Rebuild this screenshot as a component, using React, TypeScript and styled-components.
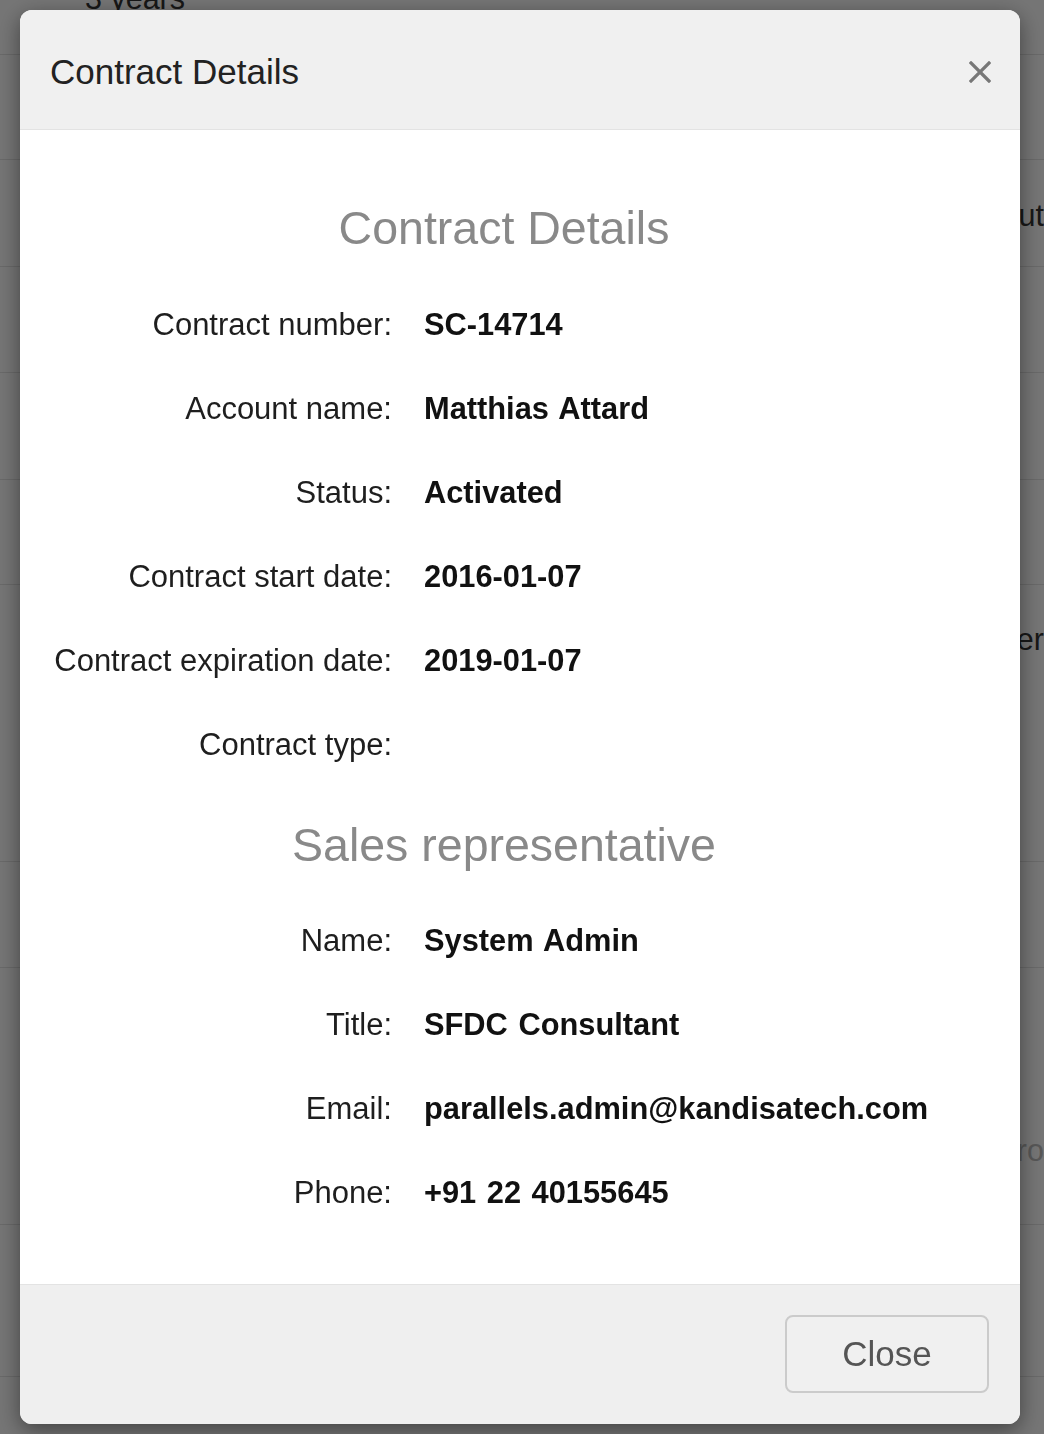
import React from "react";
import styled, { createGlobalStyle } from "styled-components";

const GlobalStyle = createGlobalStyle`
  html, body {
    margin: 0;
    padding: 0;
    overflow: hidden;
    background: #ffffff;
  }
  * { box-sizing: border-box; }
`;

const FONT = `"Liberation Sans", Arial, Helvetica, sans-serif`;

/* ---------- background page (covered by the backdrop) ---------- */
const Page = styled.div`
  font-family: ${FONT};
  width: 100%;
  height: 1434px;
  background: #ffffff;
  overflow: hidden;
`;

const BgRow = styled.div<{ $h: number; $first?: boolean; $top: number }>`
  height: ${(p) => p.$h}px;
  border-bottom: 1px solid #e4e4e4;
  display: flex;
  justify-content: space-between;
  align-items: ${(p) => (p.$first ? "flex-end" : "flex-start")};
  padding: ${(p) => (p.$first ? "0 0 36px 85px" : `${p.$top}px 0 0 85px`)};
`;

const BgCell = styled.span<{ $muted?: boolean }>`
  font-size: 30.5px;
  line-height: 40px;
  color: ${(p) => (p.$muted ? "#bdbdbd" : "#333333")};
  white-space: nowrap;
`;

/* ---------- modal ---------- */
const Backdrop = styled.div`
  position: fixed;
  inset: 0;
  background: rgba(0, 0, 0, 0.54);
  display: flex;
  align-items: flex-start;
  padding: 10px 24px 10px 20px;
`;

const Modal = styled.div`
  width: 1000px;
  height: 1414px;
  background: #ffffff;
  border-radius: 12px;
  box-shadow: 0 6px 22px rgba(0, 0, 0, 0.45);
  display: flex;
  flex-direction: column;
  overflow: hidden;
  font-family: ${FONT};
`;

const Header = styled.div`
  flex: 0 0 120px;
  background: #f0f0f0;
  border-bottom: 1px solid #e3e3e3;
  display: flex;
  align-items: center;
  justify-content: space-between;
  padding: 4px 29px 0 30px;
`;

const HeaderTitle = styled.h4`
  margin: 0;
  font-size: 35px;
  font-weight: 400;
  color: #222222;
  line-height: 1;
`;

const CloseX = styled.button`
  border: 0;
  background: transparent;
  padding: 0;
  width: 22px;
  height: 22px;
  display: flex;
  cursor: pointer;
`;

const Body = styled.div`
  flex: 1 1 auto;
  padding: 70px 62px 0 30px;
  display: flex;
  flex-direction: column;
`;

const SectionTitle = styled.h3<{ $gap: number }>`
  margin: ${(p) => p.$gap}px 0 0 0;
  font-size: 46.5px;
  line-height: 56px;
  font-weight: 300;
  color: #898989;
  text-align: center;
`;

const Fields = styled.dl<{ $gap: number }>`
  margin: ${(p) => p.$gap}px 0 0 0;
  display: grid;
  grid-template-columns: 342px 1fr;
  grid-auto-rows: 84px;
  column-gap: 32px;
  align-items: center;
`;

const Label = styled.dt`
  margin: 0;
  text-align: right;
  font-size: 31px;
  font-weight: 400;
  color: #1e1e1e;
  white-space: nowrap;
`;

const Value = styled.dd`
  margin: 0;
  font-size: 30.8px;
  font-weight: 700;
  color: #111111;
  white-space: nowrap;
  word-spacing: 2px;
`;

const Footer = styled.div`
  flex: 0 0 140px;
  background: #efefef;
  border-top: 1px solid #e3e3e3;
  display: flex;
  justify-content: flex-end;
  align-items: flex-start;
  padding: 30px 31px 0 0;
`;

const Button = styled.button`
  width: 204px;
  height: 78px;
  border: 2px solid #cbcbcb;
  border-radius: 8px;
  background: #f0f0f0;
  color: #555555;
  font-family: ${FONT};
  font-size: 35px;
  cursor: pointer;
`;

const contract: [string, string][] = [
  ["Contract number:", "SC-14714"],
  ["Account name:", "Matthias Attard"],
  ["Status:", "Activated"],
  ["Contract start date:", "2016-01-07"],
  ["Contract expiration date:", "2019-01-07"],
  ["Contract type:", ""],
];

const rep: [string, string][] = [
  ["Name:", "System Admin"],
  ["Title:", "SFDC Consultant"],
  ["Email:", "parallels.admin@kandisatech.com"],
  ["Phone:", "+91 22 40155645"],
];

const bgRows: { h: number; top?: number; left?: string; right?: string; muted?: boolean }[] = [
  { h: 55, left: "3 years" },
  { h: 105 },
  { h: 107, top: 35, right: "About" },
  { h: 106 },
  { h: 107 },
  { h: 105 },
  { h: 277, top: 34, right: "Partner" },
  { h: 106 },
  { h: 257, top: 162, right: "Pro", muted: true },
  { h: 152 },
  { h: 100 },
];

function FieldList({ items, gap }: { items: [string, string][]; gap: number }) {
  return (
    <Fields $gap={gap}>
      {items.map(([k, v]) => (
        <React.Fragment key={k}>
          <Label>{k}</Label>
          <Value>{v}</Value>
        </React.Fragment>
      ))}
    </Fields>
  );
}

export default function App() {
  return (
    <>
      <GlobalStyle />
      <Page>
        {bgRows.map((r, i) => (
          <BgRow key={i} $h={r.h} $first={i === 0} $top={r.top ?? 30}>
            <BgCell>{r.left ?? ""}</BgCell>
            <BgCell $muted={r.muted}>{r.right ?? ""}</BgCell>
          </BgRow>
        ))}
      </Page>
      <Backdrop>
        <Modal role="dialog" aria-label="Contract Details">
          <Header>
            <HeaderTitle>Contract Details</HeaderTitle>
            <CloseX aria-label="Close">
              <svg width="22" height="22" viewBox="0 0 22 22">
                <path d="M2 2 L20 20 M20 2 L2 20" stroke="#777777" strokeWidth="3.2" strokeLinecap="square" fill="none" />
              </svg>
            </CloseX>
          </Header>
          <Body>
            <SectionTitle $gap={0}>Contract Details</SectionTitle>
            <FieldList items={contract} gap={27} />
            <SectionTitle $gap={30}>Sales representative</SectionTitle>
            <FieldList items={rep} gap={26} />
          </Body>
          <Footer>
            <Button>Close</Button>
          </Footer>
        </Modal>
      </Backdrop>
    </>
  );
}
